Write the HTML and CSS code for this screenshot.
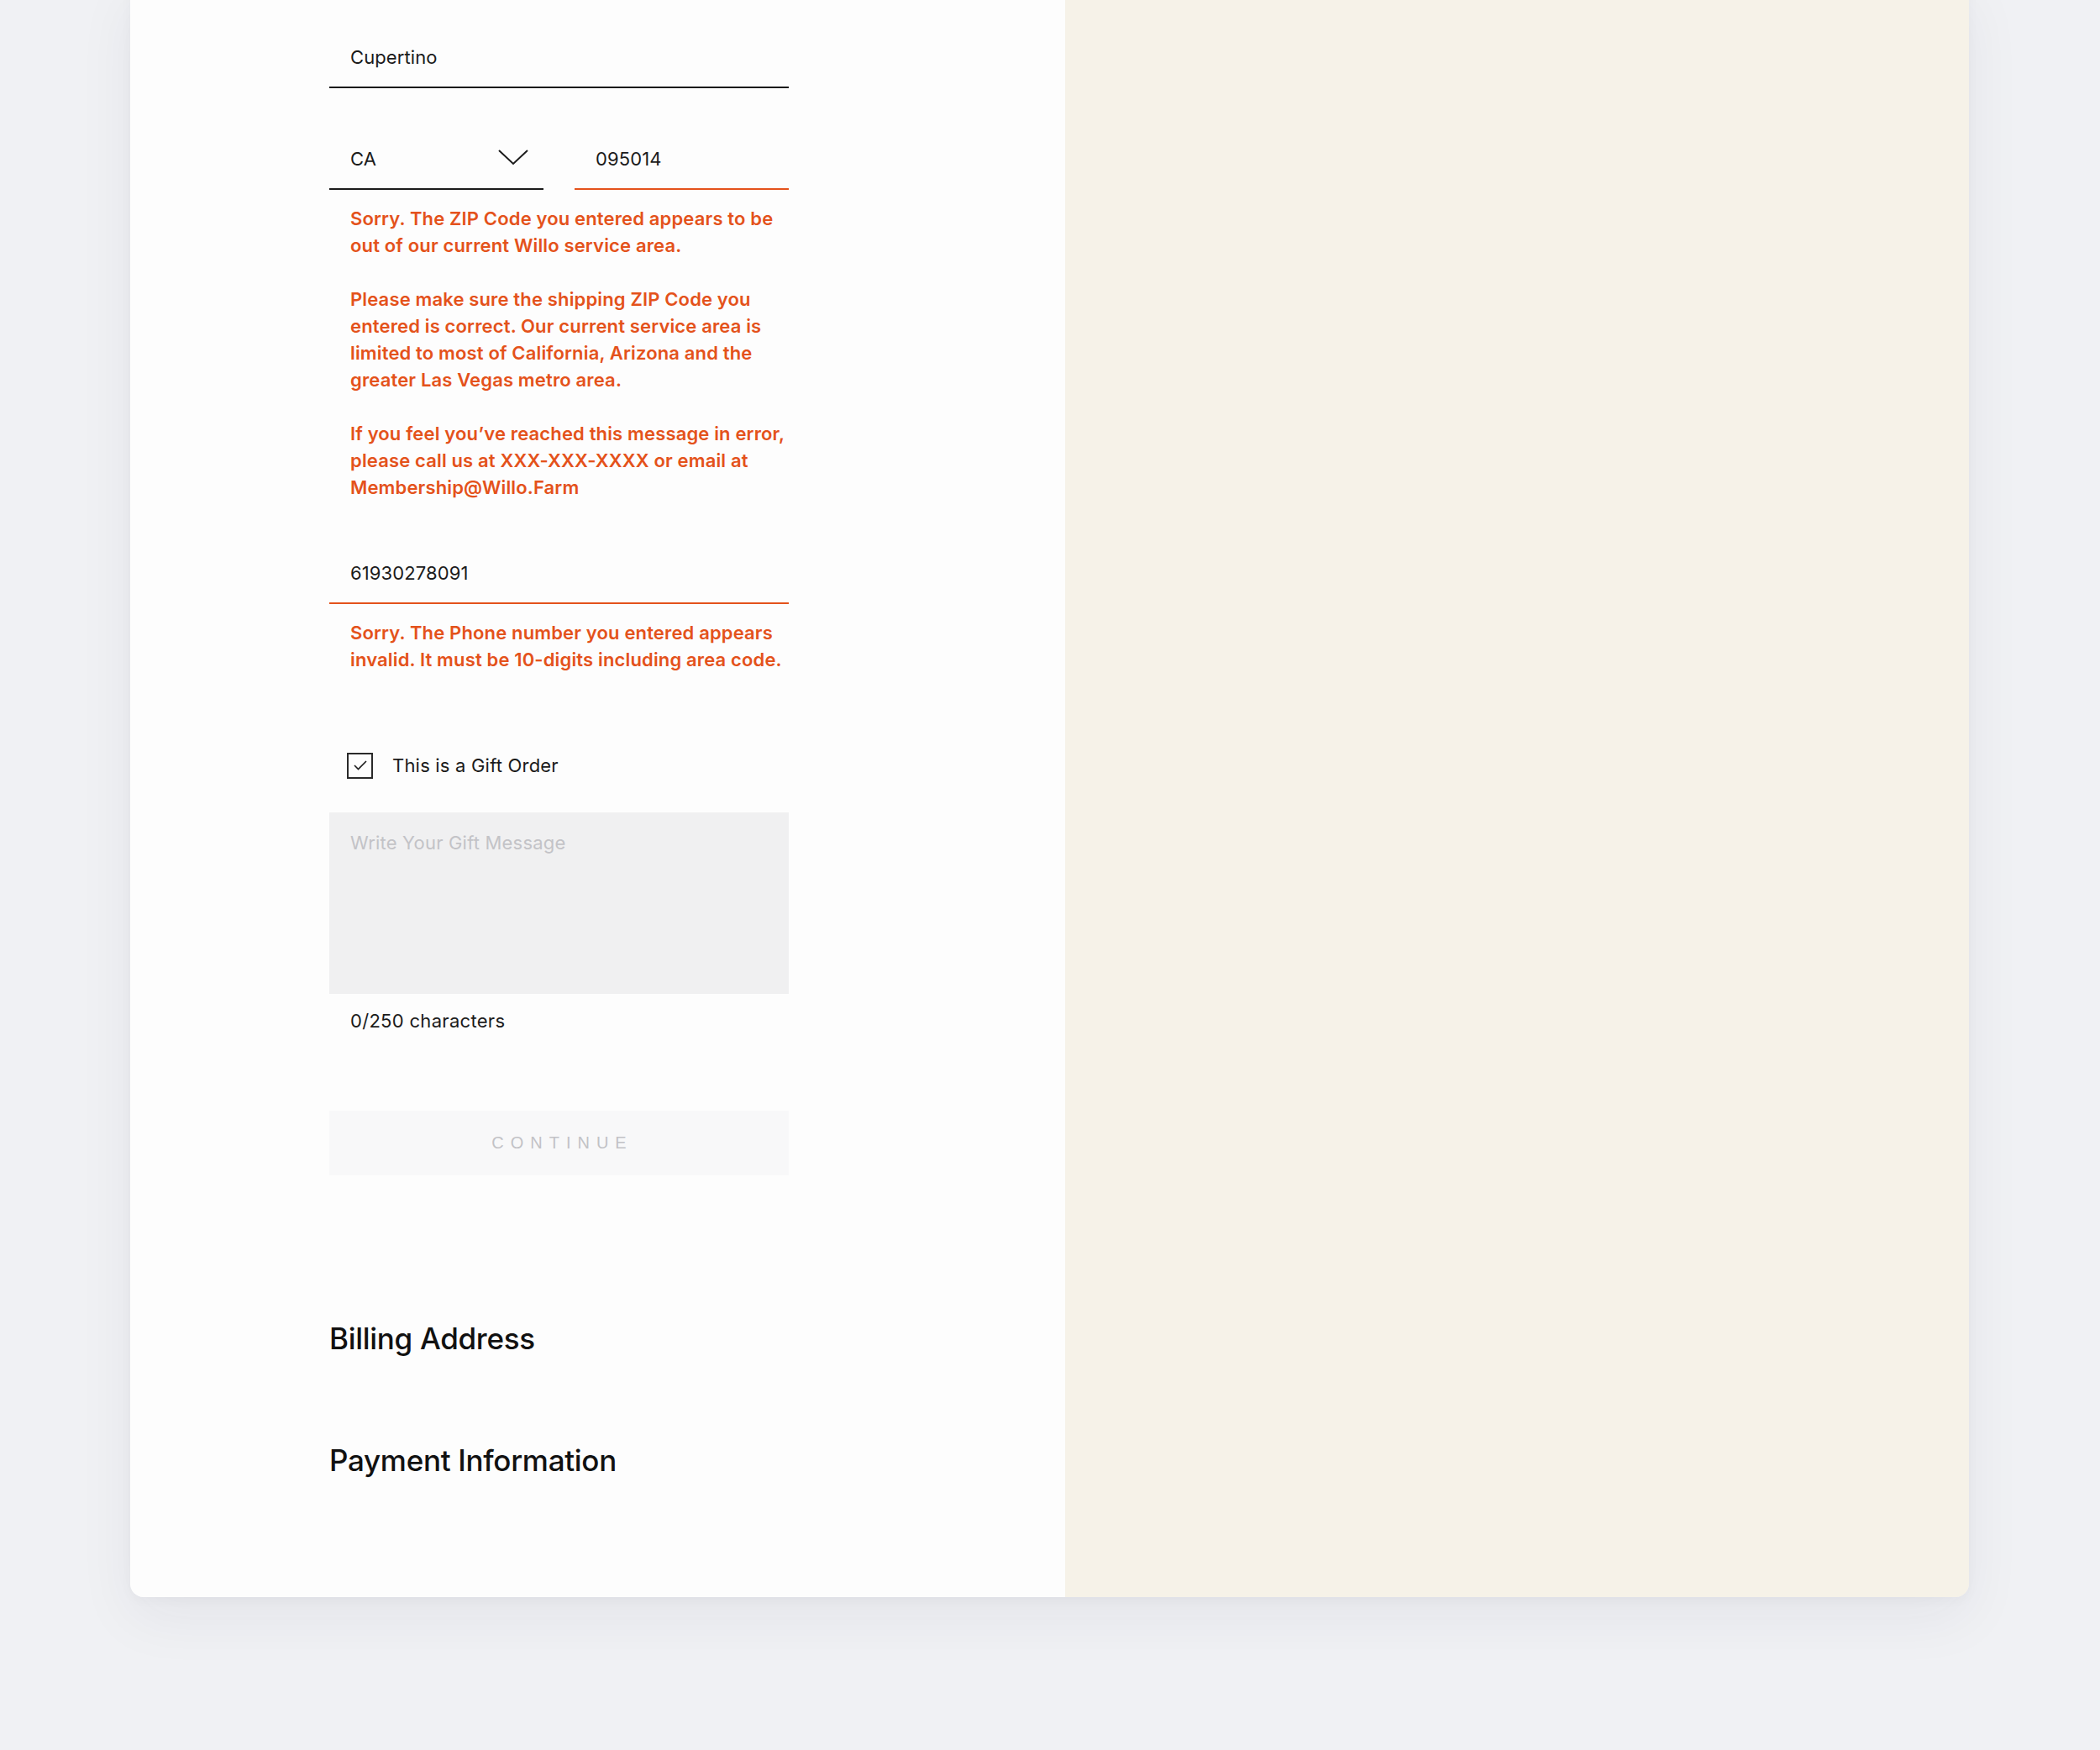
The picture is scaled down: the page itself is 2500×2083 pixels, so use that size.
FILE: index.html
```html
<!DOCTYPE html>
<html lang="en">
<head>
<meta charset="utf-8">
<title>Checkout – Shipping</title>
<link rel="stylesheet" href="styles.css">
</head>
<body>
<div class="card">
  <section class="form-panel">
    <div class="form">
      <div class="field">Cupertino</div>

      <div class="row">
        <div class="field select">
          <span>CA</span>
          <svg class="chevron" width="36" height="19" viewBox="0 0 36 19"><path d="M1 1 L18 17 L35 1" fill="none" stroke="#1b1b1b" stroke-width="2"/></svg>
        </div>
        <div class="field error-field">095014</div>
      </div>

      <div class="error">
        <p>Sorry. The ZIP Code you entered appears to be out of our current Willo service area.</p>
        <p>Please make sure the shipping ZIP Code you entered is correct. Our current service area is limited to most of California, Arizona and the greater Las Vegas metro area.</p>
        <p>If you feel you’ve reached this message in error, please call us at XXX-XXX-XXXX or email at Membership@Willo.Farm</p>
      </div>

      <div class="field error-field phone">61930278091</div>
      <div class="error">
        <p>Sorry. The Phone number you entered appears invalid. It must be 10-digits including area code.</p>
      </div>

      <label class="check-row">
        <span class="checkbox"><svg width="16" height="12" viewBox="0 0 16 12"><path d="M1 6 L5.5 10.5 L15 1" fill="none" stroke="#1b1b1b" stroke-width="1.6"/></svg></span>
        <span>This is a Gift Order</span>
      </label>

      <div class="message"><span class="placeholder">Write Your Gift Message</span></div>
      <div class="counter">0/250 characters</div>

      <div class="button">CONTINUE</div>

      <h2 class="section-title billing">Billing Address</h2>
      <h2 class="section-title payment">Payment Information</h2>
    </div>
  </section>
  <aside class="summary-panel"></aside>
</div>
</body>
</html>
```

FILE: styles.css
```css
* { box-sizing: border-box; }

html, body {
  margin: 0;
  padding: 0;
}

body {
  background: #f0f1f4;
  font-family: Inter, "Liberation Sans", sans-serif;
  color: #1b1b1b;
  height: 2083px;
  overflow: hidden;
}

.card {
  margin: -24px 0 0 155px;
  width: 2189px;
  display: grid;
  grid-template-columns: 1113px 1fr;
  border-radius: 16px;
  overflow: hidden;
  box-shadow: 0 24px 70px rgba(30, 40, 70, 0.06), 0 4px 14px rgba(30, 40, 70, 0.03);
}

.form-panel {
  background: #fdfdfd;
  padding: 57px 0 141px 237px;
}

.summary-panel {
  background: #f6f2e8;
}

.form {
  width: 547px;
  display: flex;
  flex-direction: column;
}

.field {
  font-size: 22px;
  line-height: 30px;
  padding: 20px 25px;
  border-bottom: 2px solid #1b1b1b;
  color: #1b1b1b;
  letter-spacing: 0.1px;
}

.row {
  margin-top: 49px;
  display: grid;
  grid-template-columns: 1fr 1fr;
  column-gap: 37px;
}

.select {
  display: flex;
  justify-content: space-between;
  align-items: center;
  padding-right: 18px;
}

.chevron { display: block; margin-top: -4px; }

.error-field {
  border-bottom-color: #e4521b;
}

.phone { margin-top: 51px; }

.error {
  margin-top: 18px;
  padding: 0 0 0 25px;
  color: #e4521b;
  font-size: 22px;
  line-height: 32px;
  font-weight: 600;
  letter-spacing: 0.15px;
}

.error p { margin: 0; }
.error p + p { margin-top: 32px; }

.check-row {
  margin-top: 94px;
  display: flex;
  align-items: center;
  gap: 23px;
  padding-left: 21px;
  font-size: 22px;
  line-height: 32px;
  letter-spacing: 0.2px;
}

.checkbox {
  width: 31px;
  height: 31px;
  border: 2px solid #2a2a2a;
  display: flex;
  align-items: center;
  justify-content: center;
}

.message {
  margin-top: 40px;
  height: 216px;
  background: #f0f0f1;
  padding: 21px 25px;
  font-size: 22px;
  line-height: 30px;
  letter-spacing: 0.2px;
}

.placeholder { color: #c3c3c7; }

.counter {
  margin-top: 16px;
  padding-left: 25px;
  font-size: 22px;
  line-height: 32px;
  letter-spacing: 0.3px;
}

.button {
  margin-top: 91px;
  height: 77px;
  background: #f8f8f9;
  display: flex;
  align-items: center;
  justify-content: center;
  font-family: "Liberation Sans", Arial, sans-serif;
  font-size: 20px;
  letter-spacing: 8px;
  padding-left: 8px;
  color: #c2c2c6;
}

.section-title {
  margin: 0;
  font-family: Inter, "Liberation Sans", sans-serif;
  font-weight: 500;
  font-size: 35px;
  line-height: 44px;
  letter-spacing: -0.3px;
  color: #111;
}

.billing { margin-top: 172px; }
.payment { margin-top: 101px; }
```
